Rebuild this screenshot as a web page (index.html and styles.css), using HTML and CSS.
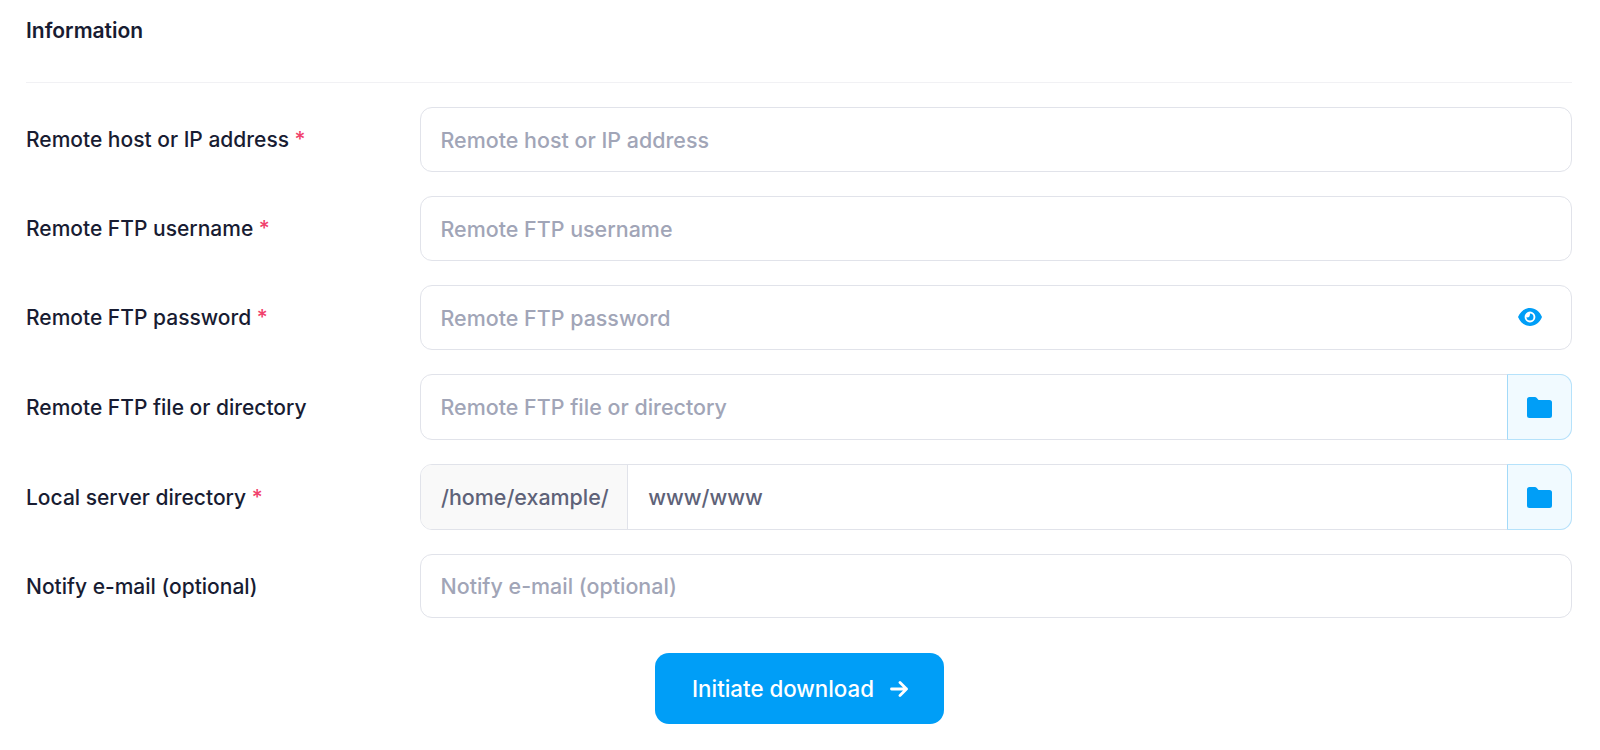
FILE: index.html
```html
<!DOCTYPE html>
<html lang="en">
<head>
    <meta charset="UTF-8">
    <meta name="viewport" content="width=device-width, initial-scale=1.0">
    <title>Remote FTP download</title>
    <link rel="stylesheet" href="styles.css">
</head>
<body>
    <div class="container">
        <h2 class="card-title">Information</h2>
        <form class="form">
            <div class="form-row">
                <label class="form-label">Remote host or IP address <span class="required">*</span></label>
                <div class="input-group">
                    <input class="form-input" type="text" placeholder="Remote host or IP address">
                </div>
            </div>
            <div class="form-row">
                <label class="form-label">Remote FTP username <span class="required">*</span></label>
                <div class="input-group">
                    <input class="form-input" type="text" placeholder="Remote FTP username">
                </div>
            </div>
            <div class="form-row">
                <label class="form-label">Remote FTP password <span class="required">*</span></label>
                <div class="input-group">
                    <input class="form-input" type="password" placeholder="Remote FTP password">
                    <span class="eye-toggle">
                        <svg width="24" height="18" viewBox="0 0 24 18"><path fill="#009ef7" fill-rule="evenodd" d="M12 0C6.500 0 2.300 3.600 0 9c2.300 5.400 6.500 9 12 9s9.700-3.600 12-9c-2.300-5.400-6.500-9-12-9zm0 3.600a5.400 5.400 0 1 1 0 10.800 5.400 5.400 0 0 1 0-10.800z"/><path fill="#009ef7" d="M12 5.500A3.500 3.500 0 1 1 8.500 9c1 .6 1.900.5 2.600-.2.700-.8.900-2 .9-3.300z"/></svg>
                    </span>
                </div>
            </div>
            <div class="form-row">
                <label class="form-label">Remote FTP file or directory</label>
                <div class="input-group addon">
                    <input class="form-input" type="text" placeholder="Remote FTP file or directory">
                    <button class="folder-btn" type="button">
                        <svg width="25" height="21" viewBox="0 0 25 21"><path fill="#009ef7" d="M0 2.500A2.500 2.500 0 0 1 2.500 0h5.300c.8 0 1.500.3 2 .9L11.500 3h11A2.500 2.500 0 0 1 25 5.500v13a2.500 2.500 0 0 1-2.500 2.500h-20A2.500 2.500 0 0 1 0 18.500z"/></svg>
                    </button>
                </div>
            </div>
            <div class="form-row">
                <label class="form-label">Local server directory <span class="required">*</span></label>
                <div class="input-group addon">
                    <span class="input-prefix">/home/example/</span>
                    <input class="form-input" type="text" value="www/www">
                    <button class="folder-btn" type="button">
                        <svg width="25" height="21" viewBox="0 0 25 21"><path fill="#009ef7" d="M0 2.500A2.500 2.500 0 0 1 2.500 0h5.300c.8 0 1.500.3 2 .9L11.500 3h11A2.500 2.500 0 0 1 25 5.500v13a2.500 2.500 0 0 1-2.500 2.500h-20A2.500 2.500 0 0 1 0 18.500z"/></svg>
                    </button>
                </div>
            </div>
            <div class="form-row">
                <label class="form-label">Notify e-mail (optional)</label>
                <div class="input-group short">
                    <input class="form-input" type="email" placeholder="Notify e-mail (optional)">
                </div>
            </div>
            <div class="form-actions">
                <button class="submit-btn" type="button">
                    Initiate download
                    <svg width="18" height="16" viewBox="0 0 18 16"><path fill="none" stroke="#fff" stroke-width="2.800" stroke-linecap="round" stroke-linejoin="round" d="M1.500 8h15M10 1.500 16.500 8 10 14.500"/></svg>
                </button>
            </div>
        </form>
    </div>
</body>
</html>
```

FILE: styles.css
```css
body {
    margin: 0;
    padding: 0;
    background-color: #fff;
    font-family: Inter, "Liberation Sans", sans-serif;
    color: #181c32;
}
.container {
    padding: 0 28px 0 26px;
}
.card-title {
    margin: 0;
    height: 83px;
    padding-top: 18px;
    box-sizing: border-box;
    font-size: 21px;
    line-height: 25px;
    font-weight: 600;
    border-bottom: 1px solid #f1f1f4;
}
.form {
    padding-top: 24px;
}
.form-row {
    display: flex;
    align-items: center;
    margin-bottom: 24px;
}
.form-label {
    width: 394px;
    flex-shrink: 0;
    font-size: 21px;
    font-weight: 500;
}
.required {
    color: #f1416c;
}
.input-group {
    flex: 1;
    display: flex;
    align-items: stretch;
    position: relative;
    height: 65px;
    box-sizing: border-box;
    border: 1px solid #e1e3ea;
    border-radius: 12px;
}
.input-group.addon {
    height: 66px;
}
.input-group.short {
    height: 64px;
}
.form-input {
    flex: 1;
    min-width: 0;
    border: 0;
    outline: 0;
    padding: 0 20px 0 19.5px;
    font-family: inherit;
    font-size: 21.45px;
    font-weight: 500;
    color: #5e6278;
    background: transparent;
}
.form-input::placeholder {
    color: #a1a5b7;
    opacity: 1;
}
.input-prefix {
    display: flex;
    align-items: center;
    padding: 0 18px 0 20px;
    font-size: 21.45px;
    font-weight: 500;
    color: #5e6278;
    background-color: #f9f9f9;
    border-right: 1px solid #e1e3ea;
    border-radius: 11px 0 0 11px;
}
.input-prefix + .form-input {
    padding-left: 20.5px;
}
.eye-toggle {
    position: absolute;
    right: 29px;
    top: 22px;
    line-height: 0;
}
.folder-btn {
    width: 65px;
    margin: -1px -1px -1px 0;
    display: flex;
    align-items: center;
    justify-content: center;
    padding: 0;
    border: 1px solid #b5e2fb;
    border-left-color: #a3daf9;
    border-radius: 0 12px 12px 0;
    background-color: #f1faff;
}
.form-actions {
    display: flex;
    justify-content: center;
    padding-top: 11px;
}
.submit-btn {
    width: 289px;
    height: 71px;
    display: flex;
    align-items: center;
    justify-content: center;
    gap: 16px;
    padding: 0 0 0 2px;
    border: 0;
    border-radius: 14px;
    background-color: #009ef7;
    color: #fff;
    font-family: inherit;
    font-size: 22.3px;
    font-weight: 500;
}
```
